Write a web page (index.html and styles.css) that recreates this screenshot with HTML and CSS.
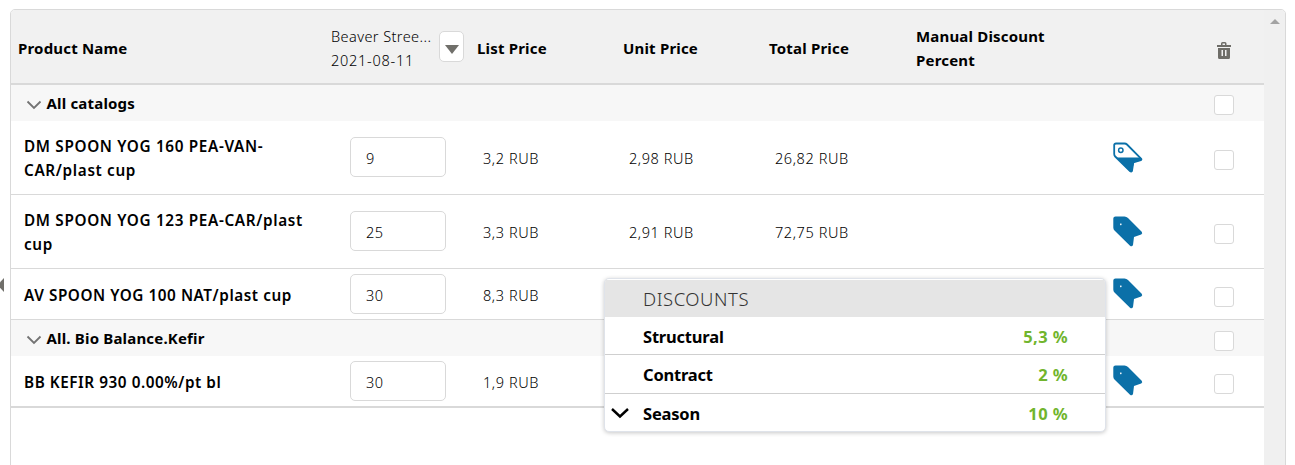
FILE: index.html
```html
<!DOCTYPE html>
<html lang="en">
<head>
<meta charset="utf-8">
<title>Order products</title>
<link rel="stylesheet" href="styles.css">
</head>
<body>
<svg class="defs" width="0" height="0">
  <symbol id="tag-full" viewBox="0 0 30 31">
    <path fill-rule="evenodd" d="M2.500 .5H11.500Q13.500 .5 15 2L28.700 15.800Q30 17.500 28.200 18.500L21 21L20 29Q19 31 17 29.700L1.500 14.500Q.3 13.300 .3 11.500V2.500Q.3 .5 2.500 .5ZM7.800 7.500a.8.8 0 1 0 .01 0Z"/>
  </symbol>
  <symbol id="tag-half" viewBox="0 0 30 31">
    <path d="M3 1.500H11.500Q13 1.500 14 2.500L28 16.500Q29 17.600 27.800 18.200L20.300 20.500L19 29Q18.200 30 17 29L2.200 14.500Q1.200 13.500 1.200 12V3Q1.200 1.500 3 1.500Z" fill="none" stroke="#0b70a8" stroke-width="1.800"/>
    <path d="M3.500 15.500H28L28.500 18.200L20.800 20.500L19 29.500L17 29.500Z"/>
    <circle cx="7.800" cy="8.300" r="2.200" fill="none" stroke="#0b70a8" stroke-width="1.500"/>
  </symbol>
  <symbol id="chevron" viewBox="0 0 16 10"><path d="M1.500 1.500L8 8L14.500 1.500" fill="none" stroke="#737373" stroke-width="1.800"/></symbol>
</svg>
<div class="side-handle"></div>
<main class="frame">
  <div class="table">
    <div class="row header">
      <div class="cell">Product Name</div>
      <div class="cell store"><div class="store-text">Beaver Stree...<br><span class="date">2021-08-11</span></div><button class="drop"><svg width="14" height="9" viewBox="0 0 14 9"><path d="M0 0H14L7 9Z" fill="#706f6a"/></svg></button></div>
      <div class="cell">List Price</div>
      <div class="cell">Unit Price</div>
      <div class="cell">Total Price</div>
      <div class="cell">Manual Discount<br>Percent</div>
      <div class="cell"></div>
      <div class="cell check"><svg class="trash" width="16" height="18" viewBox="0 0 16 18"><path fill="#6e6d68" fill-rule="evenodd" d="M5 3V1.500Q5 0 6.500 0H9Q10.500 0 10.500 1.500V3H15V5H1V3ZM6.500 3H9V1.500H6.500ZM2 6H14V15.500Q14 17 12.500 17H3.500Q2 17 2 15.500ZM5.500 8V14H7V8ZM9 8V14H10.500V8Z"/></svg></div>
    </div>
    <div class="row group"><div class="cell title"><svg class="chev" width="16" height="10"><use href="#chevron"/></svg>All catalogs</div><div class="cell check"><span class="box"></span></div></div>
    <div class="row item">
      <div class="cell name">DM SPOON YOG 160 PEA-VAN-<br>CAR/plast cup</div><div class="cell qty"><span class="input">9</span></div><div class="cell price">3,2 RUB</div><div class="cell price">2,98 RUB</div><div class="cell price">26,82 RUB</div><div class="cell"></div><div class="cell tag"><svg width="30" height="31"><use href="#tag-half"/></svg></div><div class="cell check"><span class="box"></span></div>
    </div>
    <div class="row item">
      <div class="cell name">DM SPOON YOG 123 PEA-CAR/plast<br>cup</div><div class="cell qty"><span class="input">25</span></div><div class="cell price">3,3 RUB</div><div class="cell price">2,91 RUB</div><div class="cell price">72,75 RUB</div><div class="cell"></div><div class="cell tag"><svg width="30" height="31"><use href="#tag-full"/></svg></div><div class="cell check"><span class="box"></span></div>
    </div>
    <div class="row item short">
      <div class="cell name">AV SPOON YOG 100 NAT/plast cup</div><div class="cell qty"><span class="input">30</span></div><div class="cell price">8,3 RUB</div><div class="cell"></div><div class="cell"></div><div class="cell"></div><div class="cell tag"><svg width="30" height="31"><use href="#tag-full"/></svg></div><div class="cell check"><span class="box"></span></div>
    </div>
    <div class="row group"><div class="cell title"><svg class="chev" width="16" height="10"><use href="#chevron"/></svg>All. Bio Balance.Kefir</div><div class="cell check"><span class="box"></span></div></div>
    <div class="row item short last">
      <div class="cell name">BB KEFIR 930 0.00%/pt bl</div><div class="cell qty"><span class="input">30</span></div><div class="cell price">1,9 RUB</div><div class="cell"></div><div class="cell"></div><div class="cell"></div><div class="cell tag"><svg width="30" height="31"><use href="#tag-full"/></svg></div><div class="cell check"><span class="box"></span></div>
    </div>
  </div>
  <div class="scrollbar"><svg width="10" height="5" viewBox="0 0 10 5"><path d="M5 0L10 5H0Z" fill="#a3a3a3"/></svg></div>
</main>
<section class="popup">
  <div class="popup-head">DISCOUNTS</div>
  <div class="discount"><span></span><span>Structural</span><span class="value">5,3 %</span></div>
  <div class="discount"><span></span><span>Contract</span><span class="value">2 %</span></div>
  <div class="discount"><svg width="20" height="12" viewBox="0 0 20 12"><path d="M2 1L10 8.500L18 1" fill="none" stroke="#000" stroke-width="2.400"/></svg><span>Season</span><span class="value">10 %</span></div>
</section>
</body>
</html>
```

FILE: styles.css
```css
* { box-sizing: border-box; }
html { overflow: hidden; }
body {
  margin: 0;
  height: 465px;
  padding: 9px 9px 0 10px;
  overflow: hidden;
  background: #fff;
  color: #000;
  font: 14.5px/24px "Noto Sans", "Open Sans", sans-serif;
}
.defs { position: absolute; }
.side-handle {
  position: absolute;
  left: 0;
  top: 278px;
  width: 4px;
  height: 14px;
  background: #706f6a;
  clip-path: polygon(0 30%, 100% 0, 100% 100%, 0 70%);
}
.frame {
  display: flex;
  width: 1276px;
  height: 470px;
  border: 1px solid #d9d9d9;
  border-radius: 5px;
  overflow: hidden;
}
.table { width: 1253px; }
.scrollbar {
  flex: 1;
  background: #f0f0f0;
  display: flex;
  justify-content: center;
  padding-top: 9px;
}
.row {
  display: grid;
  grid-template-columns: 313px 146px 146px 146px 147px 187px 88px 80px;
}
.cell { display: flex; align-items: center; white-space: nowrap; }
.header {
  height: 75px;
  background: #f1f1f1;
  border-bottom: 2px solid #d9d9d9;
  font-size: 15px;
  font-weight: 700;
  letter-spacing: .18px;
}
.header .cell { padding: 2px 0 0 7px; }
.header .store { font-size: 14.5px; font-weight: 300; letter-spacing: .42px; padding-top: 3px; }
.store-text { width: 108px; margin-top: -1px; }
.date { letter-spacing: .75px; }
.drop {
  display: flex;
  align-items: center;
  justify-content: center;
  width: 25px;
  height: 31px;
  margin-top: -3px;
  padding: 5px 0 0;
  border: 1px solid #d9d9d9;
  border-radius: 5px;
  background: #fff;
}
.row .check { padding: 4px 0 0 30px; }
.header .check { padding: 8px 0 0 32px; }
.group {
  height: 36px;
  background: #f7f7f7;
  grid-template-columns: 1173px 80px;
  font-size: 15px;
  font-weight: 700;
  letter-spacing: .18px;
}
.title { padding: 0 0 0 14.5px; gap: 5px; }
.chev { margin-top: 4px; }
.item { height: 74px; border-bottom: 1px solid #d9d9d9; }
.short { height: 51px; }
.last { height: 52px; border-bottom-width: 2px; }
.item .name { padding: 1px 0 0 13px; font-size: 15.3px; font-weight: 600; letter-spacing: .65px; }
.short .name { letter-spacing: .55px; }
.qty { padding: 0 0 2px 26px; }
.short .qty { padding-bottom: 0; }
.input {
  width: 96px;
  height: 40px;
  border: 1px solid #d9d9d9;
  border-radius: 5px;
  padding: 8px 0 0 15px;
  font-weight: 300;
  letter-spacing: .4px;
}
.price { padding: 1px 0 0 13px; font-weight: 300; letter-spacing: .58px; }
.tag { padding: 0 0 0 17px; fill: #0b70a8; }
.short .tag { padding-bottom: 1px; }
.short .check, .item + .group .check { padding-top: 6px; }
.box {
  width: 20px;
  height: 20px;
  border: 1px solid #d9d9d9;
  border-radius: 3px;
  background: #fff;
}
/* Floats over the table */
.popup {
  position: absolute;
  left: 604px;
  top: 278px;
  width: 502px;
  height: 154px;
  padding-top: 1px;
  border: 1px solid #dfe3ea;
  border-radius: 5px;
  background: #fff;
  box-shadow: 0 1px 4px rgba(0,0,0,.22);
  overflow: hidden;
}
.popup-head {
  height: 37px;
  padding: 7px 0 0 38px;
  background: #e5e5e5;
  color: #333;
  font-size: 18.5px;
  font-weight: 300;
  letter-spacing: .55px;
}
.discount {
  display: grid;
  grid-template-columns: 33px 1fr 70px;
  align-items: center;
  height: 38px;
  padding: 1px 37px 0 5px;
  border-bottom: 1px solid #cfcfcf;
  font-size: 16.5px;
  font-weight: 700;
  letter-spacing: -.2px;
}
.discount:nth-child(2) { padding-top: 2px; }
.discount:nth-child(3) { height: 39px; }
.discount:last-child { border-bottom: 0; }
.value { color: #71b52d; text-align: right; letter-spacing: .4px; }
```
